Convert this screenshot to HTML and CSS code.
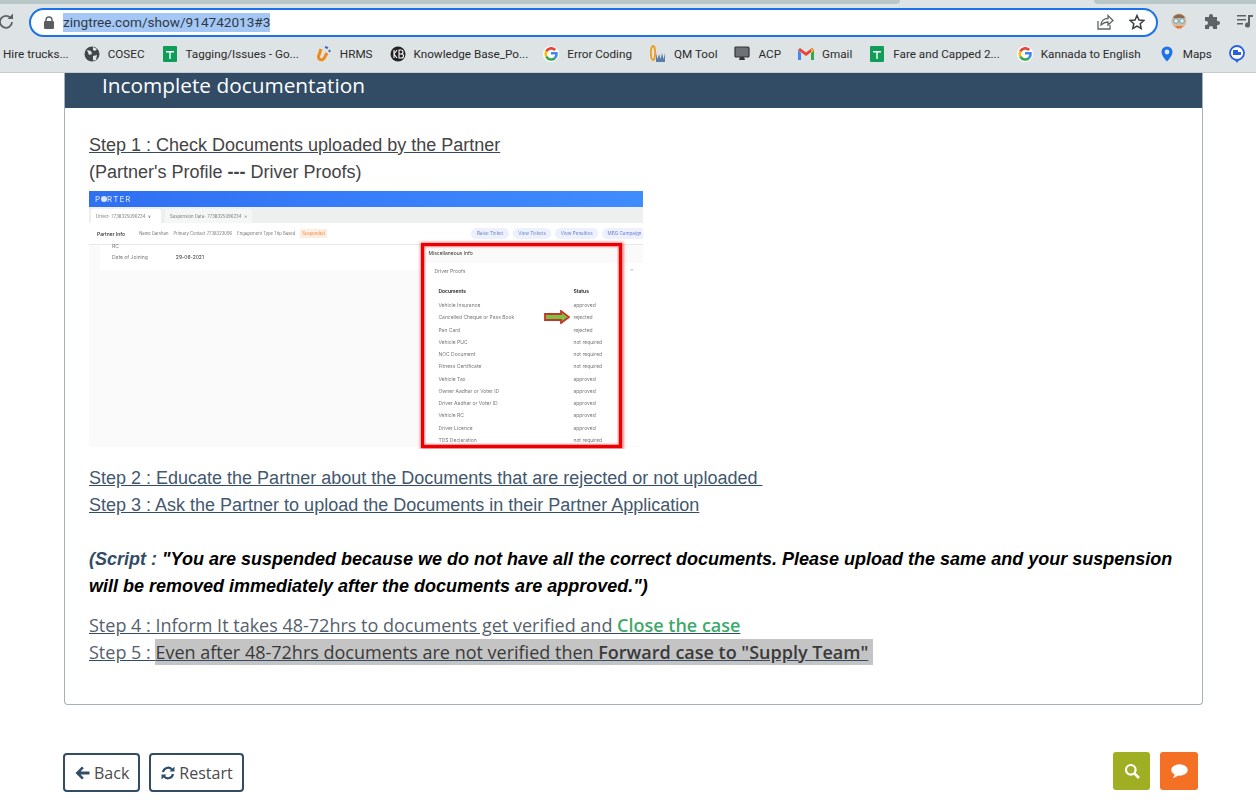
FILE: index.html
```html
<!DOCTYPE html>
<html lang="en">
<head>
  <meta charset="UTF-8" />
  <title>Incomplete documentation</title>
  <link rel="stylesheet" href="styles.css">
</head>
<body>
  <div class="chrome">
    <div class="tabstrip"><span class="tab-rest"></span><span class="tab-active"></span><span class="tab-next"></span></div>
    <div class="toolbar">
      <svg class="reload" width="16" height="16" viewBox="0 0 16 16"><path d="M13 5.5A6 6 0 1 0 14 9" fill="none" stroke="#5f6368" stroke-width="1.8"/><path d="M9.5 6H15V.5z" fill="#5f6368"/></svg>
      <div class="omnibox">
        <svg width="10" height="13" viewBox="0 0 10 13"><path d="M2 5.5V4a3 3 0 0 1 6 0v1.500" fill="none" stroke="#5a5e62" stroke-width="1.400"/><rect y="5" width="10" height="8" rx="1.200" fill="#5a5e62"/></svg>
        <span class="url">zingtree.com/show/914742013#3</span>
        <span class="omni-gap"></span>
        <svg width="18" height="18" viewBox="0 0 18 18" fill="none" stroke="#5f6368" stroke-width="1.300"><path d="M2 8v8h12v-4"/><path d="M5 12c0-4 3-6.500 7-6.500V2.500l5 5-5 4.500V9c-3 0-5 1-7 3z"/></svg>
        <svg class="star" width="16" height="16" viewBox="0 0 16 16"><path d="M8 1.500l2 4.500 4.800.5-3.600 3.200 1 4.800L8 12.100l-4.200 2.400 1-4.800L1.200 6.500 6 6z" fill="none" stroke="#3c4043" stroke-width="1.500"/></svg>
      </div>
      <div class="ext-icons">
        <svg width="16" height="18" viewBox="0 0 16 18"><circle cx="8" cy="9" r="7.500" fill="#d9b9a0"/><path d="M2 6c2-5 10-5 12 0z" fill="#8b6a4f"/><circle cx="5" cy="9" r="2.300" fill="#dff2f5" stroke="#49a" stroke-width=".8"/><circle cx="11" cy="9" r="2.300" fill="#dff2f5" stroke="#49a" stroke-width=".8"/><path d="M4 14h8l-2 2.500H6z" fill="#e07a4a"/></svg>
        <svg width="16" height="16" viewBox="0 0 16 16"><path d="M1 4h4V3a2 2 0 0 1 4 0v1h4v4h1a2 2 0 0 1 0 4h-1v4H9v-1a2 2 0 0 0-4 0v1H1v-4h1a2 2 0 0 0 0-4H1z" fill="#5f6368"/></svg>
        <svg width="16" height="14" viewBox="0 0 16 14" fill="#5f6368"><path d="M0 1h9v1.500H0zM0 5h9v1.500H0zM0 9h6v1.500H0z"/><path d="M11 1h5v2h-3v8a2.500 2.500 0 1 1-2-2.400z"/></svg>
      </div>
    </div>
    <div class="bookmarks">
      <span class="bm bm-first">Hire trucks...</span>
      <span class="bm"><svg width="16" height="16" viewBox="0 0 16 16"><circle cx="8" cy="8" r="7.500" fill="#44484c"/><path d="M3 4l4 1 1 3-3 1zM9 10l4-1-1 5-3 .5zM9 1l4 2-2 2-2-1z" fill="#e2e5e6"/></svg>COSEC</span>
      <span class="bm"><svg width="16" height="16" viewBox="0 0 16 16"><rect x="1" width="14" height="16" rx="1" fill="#0f9d58"/><path d="M4 5h8v1.500H8.700V13H7.300V6.500H4z" fill="#fff"/></svg>Tagging/Issues - Go...</span>
      <span class="bm"><svg width="16" height="16" viewBox="0 0 16 16" fill="none"><path d="M5 3L3 9a3 3 0 0 0 5 3.500L11 7" stroke="#ef8a17" stroke-width="3"/><path d="M9 1l3 1M13 4l1 2" stroke="#3b6fb5" stroke-width="2"/></svg>HRMS</span>
      <span class="bm"><svg width="16" height="16" viewBox="0 0 16 16"><circle cx="8" cy="8" r="7.500" fill="#222"/><path d="M4 4v8M4 8l3-4M4 8l3 4" stroke="#fff" fill="none" stroke-width="1.100"/><path d="M9 4v8h2.500a2 2 0 0 0 0-4H9h2a2 2 0 0 0 0-4z" stroke="#fff" fill="none" stroke-width="1.100"/></svg>Knowledge Base_Po...</span>
      <span class="bm bm-tight"><svg class="g-logo" width="16" height="16" viewBox="-1 -1 16 16" fill="none" stroke-width="2.600"><path d="M11.200 3A5.600 5.600 0 0 0 2.300 4.300" stroke="#ea4335"/><path d="M2.300 4.300a5.600 5.600 0 0 0 0 5.400" stroke="#fbbc05"/><path d="M2.300 9.700a5.600 5.600 0 0 0 8.700 1.300" stroke="#34a853"/><path d="M11 11a5.600 5.600 0 0 0 1.500-4.800H7" stroke="#4285f4"/></svg>Error Coding</span>
      <span class="bm bm-wide"><svg width="16" height="18" viewBox="0 0 16 18"><ellipse cx="3" cy="8" rx="2.200" ry="7" fill="none" stroke="#ef9a1a" stroke-width="1.800"/><path d="M6 8l1.500 6L9 9l1.500 5L12 8l1.500 6 1.500-6v9H6z" fill="#5b7fa8"/></svg>QM Tool</span>
      <span class="bm"><svg width="16" height="15" viewBox="0 0 16 15"><rect x="1" y="1" width="14" height="10" rx="1" fill="#6e7276" stroke="#333" stroke-width="1.200"/><path d="M5 14l1-3h4l1 3z" fill="#333"/></svg>ACP</span>
      <span class="bm"><svg width="16" height="12" viewBox="0 0 16 12"><path d="M0 2v10h3V5z" fill="#4285f4"/><path d="M16 2v10h-3V5z" fill="#34a853"/><path d="M0 2l2-2 6 4.500L14 0l2 2-8 6z" fill="#ea4335"/><path d="M13 .8L16 2l-3 3z" fill="#fbbc05"/></svg>Gmail</span>
      <span class="bm"><svg width="16" height="16" viewBox="0 0 16 16"><rect x="1" width="14" height="16" rx="1" fill="#0f9d58"/><path d="M4 5h8v1.500H8.700V13H7.300V6.500H4z" fill="#fff"/></svg>Fare and Capped 2...</span>
      <span class="bm"><svg class="g-logo" width="16" height="16" viewBox="-1 -1 16 16" fill="none" stroke-width="2.600"><path d="M11.200 3A5.600 5.600 0 0 0 2.300 4.300" stroke="#ea4335"/><path d="M2.300 4.300a5.600 5.600 0 0 0 0 5.400" stroke="#fbbc05"/><path d="M2.300 9.700a5.600 5.600 0 0 0 8.700 1.300" stroke="#34a853"/><path d="M11 11a5.600 5.600 0 0 0 1.500-4.800H7" stroke="#4285f4"/></svg>Kannada to English</span>
      <span class="bm bm-wide"><svg width="16" height="16" viewBox="-2 0 16 16"><path d="M6 .5A5.500 5.500 0 0 0 .5 6C.5 10 6 15.500 6 15.500S11.500 10 11.500 6A5.500 5.500 0 0 0 6 .5z" fill="#1a73e8"/><circle cx="6" cy="6" r="2.400" fill="#e2e6e7"/></svg>Maps</span>
      <span class="bm"><svg width="16" height="18" viewBox="0 0 16 18"><circle cx="8" cy="8" r="7" fill="#fff" stroke="#2a5fe0" stroke-width="1.800"/><rect x="4" y="5" width="5" height="5" fill="#2a5fe0"/><rect x="9" y="7" width="3" height="3" fill="#2a5fe0"/><path d="M6 15l2 3 2-3z" fill="#2a5fe0"/></svg></span>
    </div>
  </div>

  <div class="page">
    <section class="panel">
      <h1 class="panel-title">Incomplete documentation</h1>
      <div class="panel-body">
        <p class="line"><u>Step 1 : Check Documents uploaded by the Partner</u></p>
        <p class="line">(Partner's Profile <b>---</b> Driver Proofs)</p>

        <div class="shot">
          <div class="shot-top">P<i class="pin"></i>RTER</div>
          <div class="shot-tabs">
            <span class="shot-tab on">Driver- 7738325096234 &nbsp; <b>∨</b></span>
            <span class="shot-tab">Suspension Data- 7738325096234 &nbsp;✕</span>
          </div>
          <div class="shot-info">
            <strong>Partner Info</strong>
            <span>Name Darshan</span>
            <span>Primary Contact 7738323096</span>
            <span>Engagement Type Trip Based</span>
            <em>Suspended</em>
            <span class="shot-spacer"></span>
            <span class="chip">Raise Ticket</span>
            <span class="chip">View Tickets</span>
            <span class="chip">View Penalties</span>
            <span class="chip">MBG Campaign</span>
          </div>
          <div class="shot-main">
            <div class="shot-card">
              <div class="shot-hint">RC</div>
              <div class="shot-row"><span>Date of Joining</span><b>29-06-2021</b></div>
            </div>
            <div class="misc">
              <div class="misc-title">Miscellaneous Info</div>
              <div class="misc-head"><span>Driver Proofs</span><span>⌃</span></div>
              <div class="doc-row doc-th"><span>Documents</span><span>Status</span></div>
              <div class="doc-row"><span>Vehicle Insurance</span><span>approved</span></div>
              <div class="doc-row"><span>Cancelled Cheque or Pass Book</span><span>rejected</span></div>
              <div class="doc-row"><span>Pan Card</span><span>rejected</span></div>
              <div class="doc-row"><span>Vehicle PUC</span><span>not required</span></div>
              <div class="doc-row"><span>NOC Document</span><span>not required</span></div>
              <div class="doc-row"><span>Fitness Certificate</span><span>not required</span></div>
              <div class="doc-row"><span>Vehicle Tax</span><span>approved</span></div>
              <div class="doc-row"><span>Owner Aadhar or Voter ID</span><span>approved</span></div>
              <div class="doc-row"><span>Driver Aadhar or Voter ID</span><span>approved</span></div>
              <div class="doc-row"><span>Vehicle RC</span><span>approved</span></div>
              <div class="doc-row"><span>Driver Licence</span><span>approved</span></div>
              <div class="doc-row"><span>TDS Declaration</span><span>not required</span></div>
            </div>
          </div>
          <div class="red-box"></div>
          <svg class="green-arrow" width="26" height="14" viewBox="0 0 26 14"><path d="M1 4h16V1l8 6-8 6v-3H1z" fill="#7cc242" stroke="#c0352c" stroke-width="1.800"/></svg>
        </div>

        <p class="line blue step-gap"><u>Step 2 : Educate the Partner about the Documents that are rejected or not uploaded&nbsp;</u></p>
        <p class="line blue"><u>Step 3 : Ask the Partner to upload the Documents in their Partner Application</u></p>
        <p class="line">&nbsp;</p>
        <p class="line script"><span class="script-tag">(Script : </span>"You are suspended because we do not have all the correct documents. Please upload the same and your suspension will be removed immediately after the documents are approved.")</p>

        <p class="line open"><u>Step 4 : Inform It takes 48-72hrs to documents get verified and <b class="close-case">Close the case</b></u></p>
        <p class="line open"><u>Step 5 : <span class="marked">Even after 48-72hrs documents are not verified then <b>Forward case to "Supply Team"</b></span></u></p>
      </div>
    </section>

    <div class="actions">
      <button class="btn"><svg width="15" height="14" viewBox="0 0 15 14"><path d="M7 .5L8.800 2.300 5.500 5.500H14.500v3H5.500l3.300 3.200L7 13.500.5 7z" fill="#324c66"/></svg>Back</button>
      <button class="btn"><svg width="14" height="14" viewBox="0 0 14 14" fill="none"><path d="M2 6a5.200 5.200 0 0 1 9-2.500" stroke="#324c66" stroke-width="2.200"/><path d="M8.500 5.500h5v-5z" fill="#324c66"/><path d="M12 8a5.200 5.200 0 0 1-9 2.500" stroke="#324c66" stroke-width="2.200"/><path d="M5.500 8.500h-5v5z" fill="#324c66"/></svg>Restart</button>
      <span class="actions-gap"></span>
      <button class="square olive"><svg width="16" height="16" viewBox="0 0 16 16" fill="none" stroke="#fff"><circle cx="6.800" cy="6.800" r="4.800" stroke-width="2.200"/><path d="M10.300 10.300L15 15" stroke-width="2.600"/></svg></button>
      <button class="square orange"><svg width="17" height="14" viewBox="0 0 17 14"><ellipse cx="8.500" cy="6" rx="8.300" ry="5.700" fill="#fff"/><path d="M4 10l-2 4c2-.3 4-1.500 5.500-3z" fill="#fff"/></svg></button>
    </div>
  </div>
</body>
</html>
```

FILE: styles.css
```css
* {
  box-sizing: border-box;
}
html, body {
  margin: 0;
  height: 100%;
  overflow: hidden;
  background: #fff;
}
p, h1 {
  margin: 0;
}

/* browser chrome */
.chrome {
  height: 73px;
  background: #dee3e5;
  border-bottom: 1px solid #c6cacc;
  font-family: "Roboto", sans-serif;
}
.tabstrip {
  display: flex;
  height: 4px;
}
.tab-rest {
  width: 900px;
  background: #b9c7c8;
  border-bottom-right-radius: 4px;
}
.tab-active {
  width: 194px;
}
.tab-next {
  flex: 1;
  background: #b9c7c8;
  border-bottom-left-radius: 4px;
}
.toolbar {
  display: flex;
  align-items: center;
  height: 34px;
}
.reload {
  margin-left: -2px;
  margin-right: 15px;
}
.omnibox {
  display: flex;
  align-items: center;
  width: 1129px;
  height: 29px;
  margin-top: 2px;
  padding: 0 11px 0 13px;
  background: #fff;
  border: 2px solid #1a73e8;
  border-radius: 15px;
}
.url {
  margin-left: 9px;
  background: #a4c7f5;
  color: #2f3a46;
  font-size: 13.600px;
  line-height: 19px;
}
.omni-gap {
  flex: 1;
}
.star {
  margin-left: 15px;
}
.ext-icons {
  display: flex;
  align-items: center;
  gap: 17px;
  margin-left: 13px;
}
.bookmarks {
  display: flex;
  align-items: center;
  gap: 17px;
  height: 31px;
  padding-left: 3px;
  white-space: nowrap;
  overflow: hidden;
  font-size: 11.700px;
  color: #2b2b2b;
}
.bm {
  display: flex;
  align-items: center;
  gap: 8px;
}
.bm-first {
  margin-right: -2px;
}
.bm-tight {
  margin-left: -2px;
}
.bm-wide {
  margin-left: 1px;
}
.g-logo {
  border-radius: 50%;
  background: #fff;
}

/* panel */
.page {
  padding: 0 53px 0 63px;
}
.panel {
  margin-left: 1px;
  height: 632px;
  border: 1px solid #a5b0bb;
  border-top: none;
  border-radius: 0 0 4px 4px;
}
.panel-title {
  height: 35px;
  padding-left: 37px;
  background: #324c66;
  color: #fff;
  font: 400 20.800px/25px "Open Sans", sans-serif;
}
.panel-body {
  padding: 24px 24px 0;
}
.line {
  font: 18px/27px "Liberation Sans", Arial, sans-serif;
  color: #444;
}
.line u {
  text-decoration-color: #324c66;
}
.blue {
  color: #43586e;
}
.step-gap {
  margin-top: 16px;
}
.script {
  font-weight: bold;
  font-style: italic;
  color: #000;
}
.script-tag {
  color: #324c66;
}
.open {
  font-family: "Open Sans", sans-serif;
  color: #56616d;
}
.script + .open {
  margin-top: 12px;
}
.open b {
  font-weight: 600;
}
.close-case {
  color: #3fa96a;
}
.marked {
  padding: 1px 5px 1px 0;
  background: #c4c4c4;
  color: #3a3a3a;
}

/* the pasted screenshot of the partner page */
.shot {
  position: relative;
  width: 554px;
  height: 258px;
  margin-top: 5px;
  overflow: hidden;
  font-family: "Inter", "Liberation Sans", sans-serif;
  font-size: 5px;
  color: #777;
  filter: blur(0.4px);
  background: linear-gradient(#fafafa 256px, #fff 256px);
}
.shot-top {
  display: flex;
  align-items: center;
  height: 16px;
  padding-left: 6px;
  background: linear-gradient(90deg, #2f6ff2, #3f8cff);
  color: #d8e6ff;
  font-size: 8px;
  letter-spacing: 1px;
}
.pin {
  width: 6px;
  height: 6px;
  border-radius: 50%;
  background: #d8e6ff;
}
.shot-tabs {
  display: flex;
  align-items: flex-end;
  gap: 4px;
  height: 16px;
  padding-left: 2px;
  background: #eef0f0;
  font-size: 4.300px;
}
.shot-tab {
  display: flex;
  align-items: center;
  height: 14px;
  padding: 0 5px;
  border-radius: 3px 3px 0 0;
  background: #f5f6f6;
  white-space: nowrap;
}
.shot-tab.on {
  padding-right: 10px;
  background: #fff;
}
.shot-info {
  display: flex;
  align-items: center;
  gap: 5px;
  height: 22px;
  padding-left: 8px;
  background: #fff;
  border-bottom: 1px solid #e8e8e8;
  white-space: nowrap;
  font-size: 4.200px;
}
.shot-info strong {
  margin-right: 9px;
  color: #333;
  font-weight: 500;
  font-size: 5px;
}
.shot-info em {
  padding: 2px;
  background: #fdeee3;
  color: #f08a3c;
  font-style: normal;
}
.shot-spacer {
  flex: 1;
}
.chip {
  flex: none;
  margin-left: -1px;
  padding: 3px 5.500px;
  border-radius: 6px;
  background: #edf1fd;
  color: #6b7fd0;
  font-size: 4.600px;
}
.chip:last-child {
  margin-right: -4px;
}
.shot-main {
  display: flex;
  align-items: flex-start;
  padding-left: 11px;
}
.shot-card {
  width: 323px;
  height: 25px;
  padding-left: 12px;
  background: #fff;
}
.shot-hint {
  height: 6px;
  line-height: 2px;
}
.shot-row {
  display: flex;
  gap: 28px;
  margin-top: 3px;
}
.shot-row b {
  color: #333;
  font-weight: 400;
}
.misc {
  width: 222px;
  margin-left: -1px;
}
.misc-title {
  height: 18px;
  padding: 5px 0 0 7px;
  color: #333;
}
.misc-head {
  display: flex;
  justify-content: space-between;
  height: 20px;
  padding: 5px 9px 0 13px;
  background: #fff;
}
.doc-row {
  display: grid;
  grid-template-columns: 135px 1fr;
  height: 12.250px;
  padding-left: 17px;
  background: #fff;
  line-height: 12px;
}
.doc-th {
  height: 16px;
  padding-top: 2px;
  color: #222;
  font-weight: 600;
}
.red-box {
  position: absolute;
  left: 332px;
  top: 52px;
  width: 201px;
  height: 205px;
  border: 3px solid #ee0000;
  box-shadow: 0 0 3px 1.500px rgba(220, 40, 40, .7), inset 0 0 2px 1px rgba(220, 40, 40, .6);
}
.green-arrow {
  position: absolute;
  left: 455px;
  top: 119px;
}

/* bottom buttons */
.actions {
  display: flex;
  align-items: flex-start;
  gap: 9px;
  margin-top: 48px;
}
.actions-gap {
  flex: 1;
}
.btn {
  display: flex;
  align-items: center;
  gap: 4px;
  height: 39px;
  padding: 0 9px 0 10px;
  background: #fff;
  border: 2px solid #324c66;
  border-radius: 4px;
  color: #4a4a4a;
  font: 16px "Open Sans", sans-serif;
}
.square {
  display: flex;
  align-items: center;
  justify-content: center;
  width: 37px;
  height: 38px;
  margin-top: -1px;
  border: none;
  border-radius: 3px;
}
.olive {
  background: #9fae23;
}
.orange {
  width: 38px;
  margin-left: 1px;
  margin-right: 5px;
  background: #f47025;
}
```
